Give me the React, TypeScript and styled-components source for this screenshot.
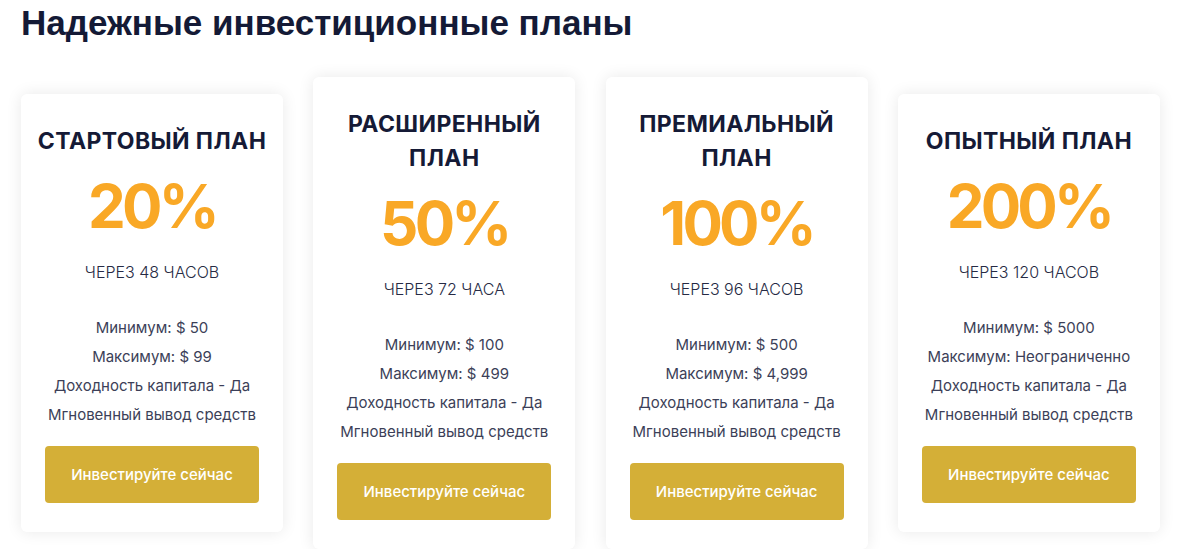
import React from "react";
import styled, { createGlobalStyle } from "styled-components";

const Global = createGlobalStyle`
  html, body { margin: 0; padding: 0; background: #ffffff; }
  body { font-family: Inter, "Open Sans", sans-serif; }
`;

const Page = styled.main`
  padding: 0 21px;
  width: 1193px;
  box-sizing: border-box;
`;

const Title = styled.h1`
  margin: 0;
  padding-top: 3px;
  font-family: "Liberation Sans", Arial, sans-serif;
  font-weight: 700;
  font-size: 35px;
  line-height: 40px;
  color: #141a36;
`;

const Row = styled.section`
  margin-top: 34px;
  display: flex;
  align-items: center;
  gap: 30.3px;
`;

const Card = styled.article`
  flex: 0 0 262px;
  box-sizing: border-box;
  background: #fff;
  border-radius: 6px;
  box-shadow: 0 0 16px rgba(0, 0, 0, 0.09);
  padding: 30px 10px 29px;
  display: flex;
  flex-direction: column;
  align-items: center;
  text-align: center;
`;

const PlanName = styled.h2`
  margin: 0;
  font-family: Inter, sans-serif;
  font-weight: 700;
  font-size: 23px;
  line-height: 34px;
  letter-spacing: 0.4px;
  color: #151a36;
`;

const Percent = styled.div`
  margin-top: 12px;
  font-family: Inter, sans-serif;
  font-weight: 700;
  font-size: 60px;
  line-height: 72px;
  letter-spacing: -3.8px;
  color: #f9a826;
`;

const Term = styled.div`
  margin-top: 18px;
  font-size: 16px;
  line-height: 24px;
  font-weight: 300;
  color: #262a44;
`;

const Features = styled.ul`
  list-style: none;
  margin: 29px 0 0;
  padding: 0;
`;

const Feature = styled.li`
  font-size: 15px;
  line-height: 29px;
  color: #3c3f58;
  white-space: nowrap;
`;

const Button = styled.button`
  margin-top: 17px;
  width: 214px;
  height: 57px;
  border: none;
  border-radius: 4px;
  background: #d4af37;
  color: #fff;
  font-family: Inter, sans-serif;
  font-weight: 500;
  font-size: 15px;
  cursor: pointer;
`;

const plans = [
  { name: "СТАРТОВЫЙ ПЛАН", pct: "20%", term: "ЧЕРЕЗ 48 ЧАСОВ", min: "$ 50", max: "$ 99" },
  { name: "РАСШИРЕННЫЙ ПЛАН", pct: "50%", term: "ЧЕРЕЗ 72 ЧАСА", min: "$ 100", max: "$ 499" },
  { name: "ПРЕМИАЛЬНЫЙ ПЛАН", pct: "100%", term: "ЧЕРЕЗ 96 ЧАСОВ", min: "$ 500", max: "$ 4,999" },
  { name: "ОПЫТНЫЙ ПЛАН", pct: "200%", term: "ЧЕРЕЗ 120 ЧАСОВ", min: "$ 5000", max: "Неограниченно" },
];

export default function App() {
  return (
    <>
      <Global />
      <Page>
        <Title>Надежные инвестиционные планы</Title>
        <Row>
          {plans.map((p) => (
            <Card key={p.name}>
              <PlanName>{p.name}</PlanName>
              <Percent>{p.pct}</Percent>
              <Term>{p.term}</Term>
              <Features>
                <Feature>Минимум: {p.min}</Feature>
                <Feature>Максимум: {p.max}</Feature>
                <Feature>Доходность капитала - Да</Feature>
                <Feature>Мгновенный вывод средств</Feature>
              </Features>
              <Button>Инвестируйте сейчас</Button>
            </Card>
          ))}
        </Row>
      </Page>
    </>
  );
}
